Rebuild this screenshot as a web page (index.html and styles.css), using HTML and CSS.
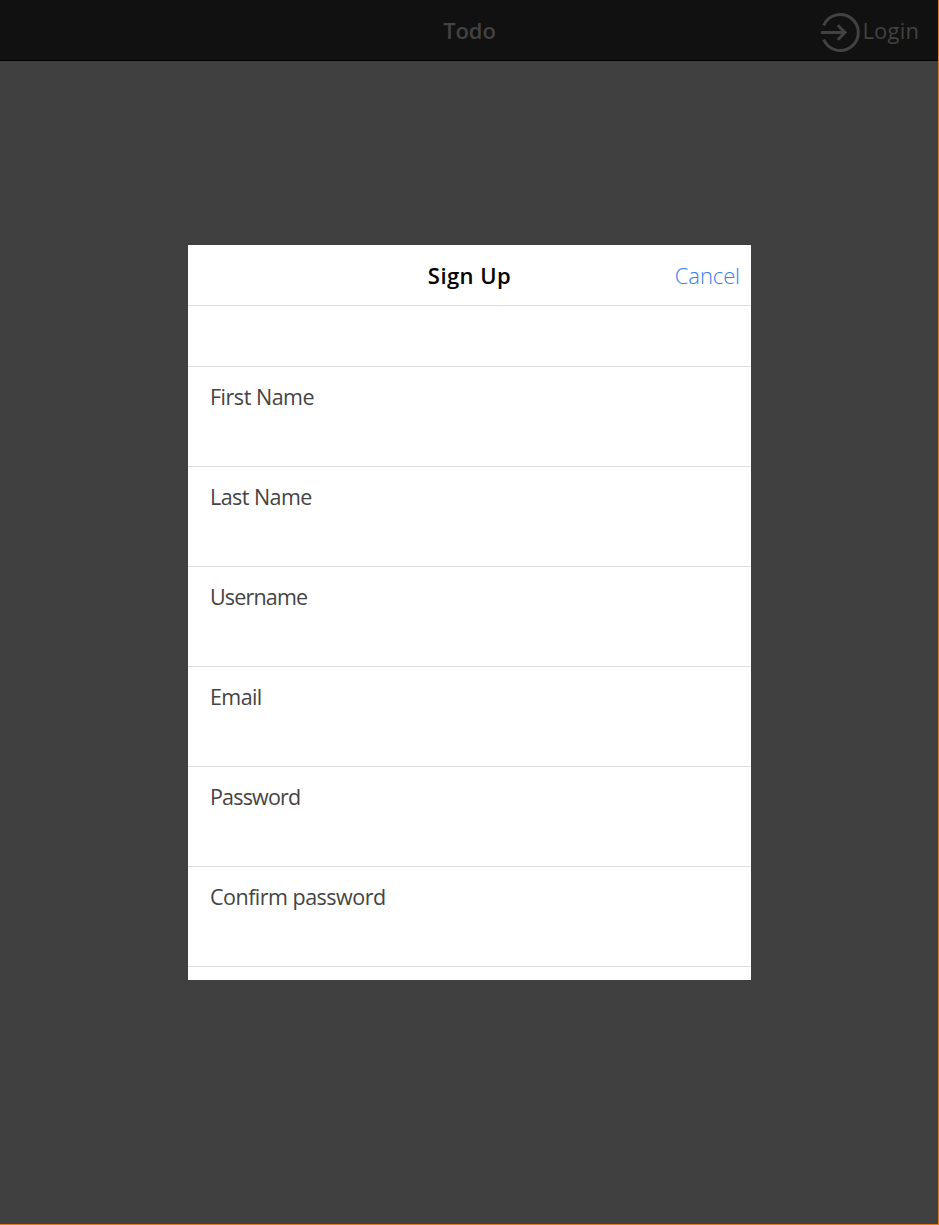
FILE: index.html
```html
<!DOCTYPE html>
<html lang="en">
<head>
<meta charset="utf-8">
<title>Todo</title>
<link rel="stylesheet" href="styles.css">
</head>
<body>
<div class="app">
  <header class="navbar">
    <span></span>
    <h1 class="title page-title">Todo</h1>
    <a class="login">
      <svg class="login-icon" width="40" height="40" viewBox="0 0 40 40" fill="none" stroke="currentColor" stroke-width="3">
        <path d="M2.700 13.500A18 18 0 1 1 2.700 27.500"/>
        <path d="M0 20.500H24.500M16.800 13.300L24 20.500L16.800 27.700"/>
      </svg>
      <span class="login-text">Login</span>
    </a>
  </header>
  <main class="backdrop">
    <section class="modal">
      <header class="modal-bar">
        <span></span>
        <h2 class="title modal-title">Sign Up</h2>
        <a class="cancel">Cancel</a>
      </header>
      <div class="spacer"></div>
      <div class="field">First Name</div>
      <div class="field last-name">Last Name</div>
      <div class="field single">Username</div>
      <div class="field email">Email</div>
      <div class="field single">Password</div>
      <div class="field confirm">Confirm password</div>
    </section>
  </main>
</div>
</body>
</html>
```
FILE: styles.css
```css
* { box-sizing: border-box; }
body {
  margin: 0;
  font-family: "Open Sans", sans-serif;
  font-size: 22px;
  line-height: 30px;
  color: #444;
}
.app {
  display: flex;
  flex-direction: column;
  height: 1225px;
  background: #404040;
  border-right: 1px solid #e57a17;
  border-bottom: 1px solid #e57a17;
}
.navbar, .modal-bar {
  display: grid;
  grid-template-columns: 1fr auto 1fr;
  align-items: center;
  height: 61px;
  flex: none;
}
.navbar {
  background: #111;
  border-bottom: 1px solid #000;
  color: #424242;
}
.title { margin: 0; font-size: 22px; font-weight: 600; white-space: nowrap; }
.page-title { padding-left: 1px; letter-spacing: -0.15px; }
.modal-title { letter-spacing: 0.45px; }
.login {
  display: flex;
  justify-content: flex-end;
  align-items: center;
  padding-right: 19px;
}
.login-icon { flex: none; margin-top: 4px; }
.login-text { width: 58px; padding-left: 1.4px; letter-spacing: 0.25px; }
.backdrop { flex: 1; padding: 184px 187px 0 188px; }
.modal { height: 735px; background: #fff; overflow: hidden; }
.modal-bar { border-bottom: 1px solid #ddd; color: #000; }
.cancel {
  padding-right: 11px;
  text-align: right;
  font-weight: 300;
  letter-spacing: -0.1px;
  color: #387ef5;
}
.spacer { height: 61px; border-bottom: 1px solid #ddd; }
.field {
  height: 100px;
  padding: 15px 22px;
  border-bottom: 1px solid #ddd;
  font-size: 21.5px;
  letter-spacing: -0.48px;
}
.last-name { letter-spacing: -0.55px; }
.single { letter-spacing: -0.83px; }
.email { letter-spacing: -0.6px; }
.confirm { letter-spacing: -0.51px; }
```
